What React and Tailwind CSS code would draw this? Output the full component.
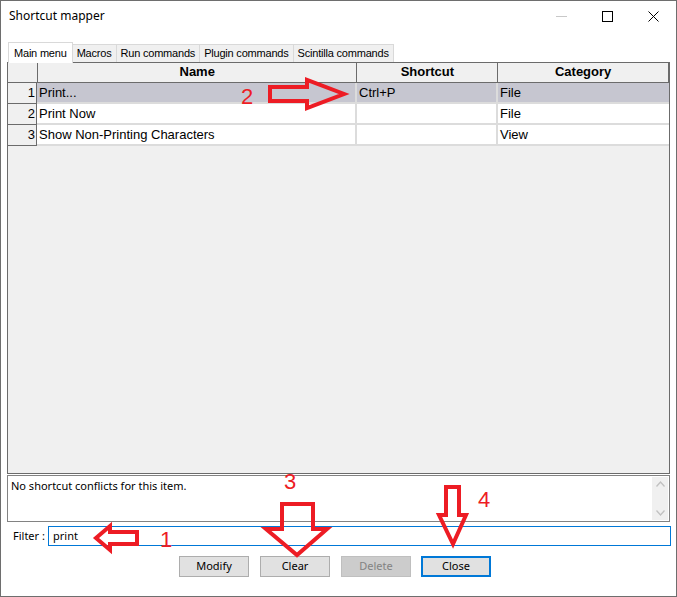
const tabs = ["Main menu", "Macros", "Run commands", "Plugin commands", "Scintilla commands"];

const rows = [
  { id: 1, name: "Print...", shortcut: "Ctrl+P", category: "File", selected: true },
  { id: 2, name: "Print Now", shortcut: "", category: "File" },
  { id: 3, name: "Show Non-Printing Characters", shortcut: "", category: "View" },
];

const ui = { fontFamily: '"Noto Sans", "Open Sans", sans-serif' };
const arial = { fontFamily: '"Liberation Sans", Arial, sans-serif' };

const Annotations = () => (
  <svg className="absolute inset-0 pointer-events-none" width="677" height="597">
    <g fill="none" stroke="#ed1c24" strokeWidth="4" strokeLinejoin="miter">
      {/* 2: right arrow */}
      <polygon points="269,86 306,86 306,79 343,93 306,107 306,100 269,100" />
      {/* 1: left arrow */}
      <polygon points="136,531 109,531 109,525 95,537 109,549 109,543 136,543" />
      {/* 3: down arrow */}
      <polygon points="281,503 312,503 312,528 326,528 296,554 265,528 281,528" />
      {/* 4: down arrow */}
      <polygon points="445,486 458,486 458,514 465,514 452,543 438,514 445,514" />
    </g>
    <g fill="#ed1c24" style={{ fontFamily: '"Liberation Sans", Arial, sans-serif' }} fontSize="22">
      <text x="240" y="103">2</text>
      <text x="159" y="546">1</text>
      <text x="283" y="488">3</text>
      <text x="477" y="506">4</text>
    </g>
  </svg>
);

const App = () => {
  return (
    <div className="relative w-[677px] h-[597px] bg-white border border-[#6e6e6e] overflow-hidden text-black">
      {/* Title bar */}
      <div className="h-[30px] flex items-center justify-between" style={ui}>
        <span className="pl-[8px] text-[12px]">Shortcut mapper</span>
        <div className="flex items-center h-full">
          <div className="w-[46px] flex justify-center">
            <div className="w-[11px] h-px bg-[#c8c8c8]" />
          </div>
          <div className="w-[46px] flex justify-center">
            <div className="w-[11px] h-[11px] border border-black" />
          </div>
          <div className="w-[46px] flex justify-center">
            <svg width="11" height="11" viewBox="0 0 11 11">
              <path d="M0.5 0.5 L10.5 10.5 M10.5 0.5 L0.5 10.5" stroke="#000" strokeWidth="1" />
            </svg>
          </div>
        </div>
      </div>

      <div className="px-[6px]">
        {/* Tabs */}
        <div className="mt-[11px] flex items-end h-[20px] pl-[1px] text-[11px] tracking-[-0.2px]" style={arial}>
          {tabs.map((t, i) =>
            i === 0 ? (
              <div
                key={t}
                className="h-[21px] px-[5px] flex items-center bg-white border border-b-0 border-[#d9d9d9] relative top-px"
              >
                {t}
              </div>
            ) : (
              <div
                key={t}
                className="h-[18px] px-[4px] flex items-center bg-[#f0f0f0] border border-l-0 border-b-0 border-[#d9d9d9]"
              >
                {t}
              </div>
            )
          )}
        </div>

        {/* Grid */}
        <div className="h-[412px] border border-[#6b6b6b] bg-[#f0f0f0] text-[13px]" style={arial}>
          <div className="flex h-[20px] font-bold">
            <div className="w-[30px] bg-[#f0f0f0] border-r border-b border-[#6b6b6b]" />
            <div className="w-[320px] flex items-center justify-center pb-[2px] border-r border-b border-[#6b6b6b]">Name</div>
            <div className="w-[141px] flex items-center justify-center pb-[2px] border-r border-b border-[#6b6b6b]">Shortcut</div>
            <div className="w-[171px] flex items-center justify-center pb-[2px] border-r border-b border-[#6b6b6b]">Category</div>
          </div>
          {rows.map((r) => (
            <div key={r.id} className="flex h-[21px]">
              <div className="w-[30px] flex items-center justify-end pr-[1px] border-r border-b border-[#6b6b6b]">
                {r.id}
              </div>
              <div className={`flex flex-1 ${r.selected ? "bg-[#c6c6d0]" : "bg-white"}`}>
                <div className="w-[320px] flex items-center pl-[2px] border-r-2 border-b-2 border-[#dcdcdc]">{r.name}</div>
                <div className="w-[141px] flex items-center pl-[2px] border-r-2 border-b-2 border-[#dcdcdc]">{r.shortcut}</div>
                <div className="w-[171px] flex items-center pl-[2px] border-b-2 border-[#dcdcdc]">{r.category}</div>
              </div>
            </div>
          ))}
        </div>

        {/* Conflict info */}
        <div className="mt-[1px] h-[47px] border border-[#828282] flex bg-white">
          <div className="flex-1 pl-[3px] pt-[2px] text-[11px]" style={ui}>
            No shortcut conflicts for this item.
          </div>
          <div className="w-[16px] my-[1px] mr-[1px] bg-[#f0f0f0] flex flex-col items-center justify-between py-[4px]">
            <svg width="9" height="6" viewBox="0 0 9 6">
              <path d="M0.5 5.5 L4.5 1 L8.5 5.5" fill="none" stroke="#c1c1c1" strokeWidth="1.3" />
            </svg>
            <svg width="9" height="6" viewBox="0 0 9 6">
              <path d="M0.5 0.5 L4.5 5 L8.5 0.5" fill="none" stroke="#c1c1c1" strokeWidth="1.3" />
            </svg>
          </div>
        </div>

        {/* Filter */}
        <div className="mt-[4px] flex items-center h-[20px] text-[11px]" style={ui}>
          <span className="pl-[6px] w-[41px]">Filter :</span>
          <div className="flex-1 h-[20px] border border-[#0078d7] flex items-center pl-[4px] -mr-[1px]">print</div>
        </div>

        {/* Buttons */}
        <div className="mt-[10px] flex gap-[11px] pl-[172px] text-[11px]" style={ui}>
          <button className="w-[70px] h-[21px] bg-[#e1e1e1] border border-[#adadad]">Modify</button>
          <button className="w-[70px] h-[21px] bg-[#e1e1e1] border border-[#adadad]">Clear</button>
          <button className="w-[70px] h-[21px] bg-[#cccccc] border border-[#bfbfbf] text-[#838383]">Delete</button>
          <button className="w-[70px] h-[21px] bg-[#e1e1e1] border-2 border-[#0078d7] -ml-px">Close</button>
        </div>
      </div>

      <Annotations />
    </div>
  );
};

export default App;
